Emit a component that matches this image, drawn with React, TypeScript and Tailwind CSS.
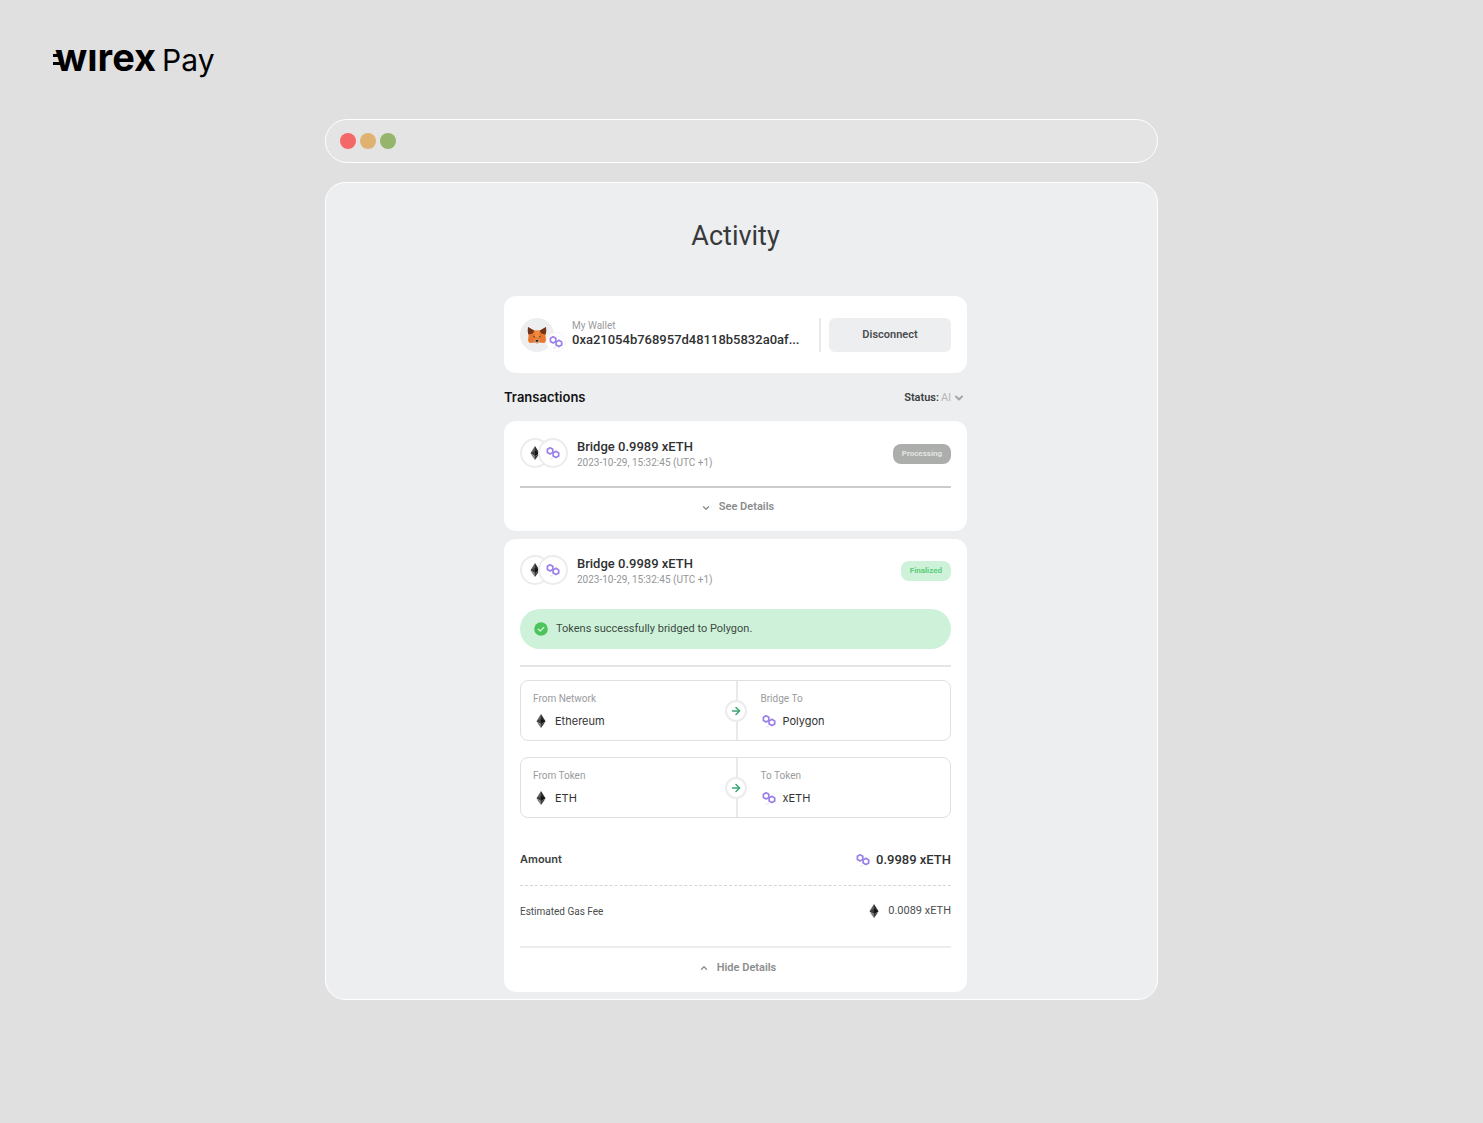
import React from 'react';
import { ArrowRight, ChevronDown, ChevronUp } from 'lucide-react';

const EthIcon = () => (
  <svg viewBox="0 0 12 16" className="w-3 h-4 shrink-0" aria-hidden="true">
    <path d="M6 1 1.5 8.2 6 11z" fill="#5c5c5c" />
    <path d="M6 1l4.5 7.2L6 11z" fill="#2d2d2d" />
    <path d="M6 6 1.5 8.2 6 11z" fill="#3c3c3b" />
    <path d="M6 6l4.5 2.2L6 11z" fill="#141414" />
    <path d="M1.7 9 6 15v-4z" fill="#7a7a7a" />
    <path d="M10.3 9 6 15v-4z" fill="#3c3c3b" />
  </svg>
);

const PolygonIcon = () => (
  <svg viewBox="0 0 14 14" className="w-3.5 h-3.5 shrink-0" fill="none" stroke="#9a80e8" aria-hidden="true">
    <path d="M4.1 1.8 6.8 3.3v3.2L4.1 8 1.4 6.5V3.3z" strokeWidth="1.7" strokeLinejoin="round" />
    <path d="M9.9 5.3l2.8 1.6v3.2l-2.8 1.5-2.8-1.5V6.9z" strokeWidth="1.7" strokeLinejoin="round" />
    <path d="M4 12.8h3" stroke="#ddd5f8" strokeWidth="0.8" />
  </svg>
);

const FoxIcon = () => (
  <svg viewBox="0 0 20 18" className="w-5 h-[18px]" aria-hidden="true">
    <path d="M1 1l6 3.6h6L19 1l-.6 8.5.6 5-1.6 2.5-5-.5-2.4 1-2.4-1-5 .5L1 14.5l.6-5z" fill="#e8762d" />
    <path d="M1 1l6.4 3.8L5.6 7.6 1.4 8.4.7 5z" fill="#6f341b" />
    <path d="M19 1l-6.4 3.8 1.8 2.8 4.2.8.7-3.4z" fill="#6f341b" />
    <path d="M7.4 4.8h5.2l-.9 6.7H8.3z" fill="#f28a3d" />
    <path d="M5.4 9.5l2.5 1-.3 1.2zM14.6 9.5l-2.5 1 .3 1.2z" fill="#374049" />
    <path d="M7.2 13.5h5.6l-.7 3.2-2.1.6-2.1-.6z" fill="#d0a488" />
    <path d="M8.5 14h3l-.5 1.8H9z" fill="#292929" />
  </svg>
);

const CheckIcon = () => (
  <svg viewBox="0 0 14 14" className="w-3.5 h-3.5 shrink-0" aria-hidden="true">
    <circle cx="7" cy="7" r="6.8" fill="#4cc45b" />
    <path d="M4.2 7.1l2 1.9 3.6-3.6" fill="none" stroke="#d8f7df" strokeWidth="1.3" strokeLinecap="round" strokeLinejoin="round" />
  </svg>
);

const Logo = () => (
  <div className="flex items-baseline h-10 font-[Inter,sans-serif] text-black" aria-label="Wirex Pay">
    <svg viewBox="0 0 10 18" className="w-2.5 h-[18px] -mr-2" aria-hidden="true">
      <path d="M0 1h7l1 3H0zM0 9h9l1 3H0z" fill="#000" />
    </svg>
    <span className="text-[38px] leading-10 font-bold">wırex</span>
    <span className="ml-1.5 text-[30px] leading-10">Pay</span>
  </div>
);

interface TransactionHeaderProps {
  title: string;
  date: string;
  status: 'Processing' | 'Finalized';
}

const TransactionHeader = ({ title, date, status }: TransactionHeaderProps) => (
  <div className="flex items-center h-[30px]">
    <div className="flex items-center">
      <span className="flex items-center justify-center w-[30px] h-[30px] rounded-full border-2 border-[#ececec] bg-white">
        <EthIcon />
      </span>
      <span className="flex items-center justify-center w-[30px] h-[30px] -ml-3 rounded-full border-2 border-[#ececec] bg-white">
        <PolygonIcon />
      </span>
    </div>
    <div className="ml-[9px] pt-1 flex-1">
      <h3 className="text-[13px] leading-4 font-medium text-[#2f3132]">{title}</h3>
      <p className="text-[10px] leading-4 text-[#949698]">{date}</p>
    </div>
    <span
      className={`mt-0.5 px-[9px] rounded-lg text-[8px] leading-5 font-semibold ${
        status === 'Processing' ? 'bg-[#acaeac] text-[#e6e7e6]' : 'bg-[#cdf2d9] text-[#55cb75]'
      }`}
    >
      {status}
    </span>
  </div>
);

interface TransferSideProps {
  label: string;
  value: string;
  icon: React.ReactNode;
}

const TransferSide = ({ label, value, icon }: TransferSideProps) => (
  <div>
    <p className="text-[10px] leading-4 text-[#9a9b9d]">{label}</p>
    <div className="flex items-center mt-1">
      <span className="flex justify-center w-4">{icon}</span>
      <span className="ml-1.5 font-[Inter,sans-serif] text-[11px] leading-5 text-[#303233]">{value}</span>
    </div>
  </div>
);

const TransferBox = ({ from, to }: { from: TransferSideProps; to: TransferSideProps }) => (
  <div className="relative grid grid-cols-2 h-[61px] border border-[#dfe0e1] rounded-lg">
    <div className="pl-3 pt-2.5">
      <TransferSide {...from} />
    </div>
    <div className="pl-[23px] pt-2.5 border-l-2 border-[#e8e9ea]">
      <TransferSide {...to} />
    </div>
    <span className="absolute left-1/2 top-1/2 -translate-x-1/2 -translate-y-1/2 flex items-center justify-center w-[22px] h-[22px] rounded-full border-2 border-[#ececed] bg-white">
      <ArrowRight className="w-3 h-3 text-[#3da673]" strokeWidth={3} />
    </span>
  </div>
);

const App = () => {
  return (
    <div className="min-h-screen bg-[#e0e0e0] font-[Roboto,sans-serif] pb-[123px]">
      <header className="pl-[53px] pt-[37px]">
        <Logo />
      </header>

      <main className="w-full max-w-[833px] mx-auto mt-[42px]">
        <div className="flex items-center gap-1 h-11 px-3.5 rounded-full border border-white bg-[#e4e4e4]">
          <span className="w-4 h-4 rounded-full bg-[#f56868]" />
          <span className="w-4 h-4 rounded-full bg-[#dfb272]" />
          <span className="w-4 h-4 rounded-full bg-[#94b56b]" />
        </div>

        <div className="mt-[19px] rounded-[20px] border border-white bg-[#edeef0] pt-[33px] pb-[7px] pr-3">
          <div className="w-full max-w-[463px] mx-auto">
            <h1 className="text-center text-[27px] leading-10 text-[#37393b]">Activity</h1>

            <section className="flex items-center mt-10 h-[77px] px-4 rounded-xl bg-white">
              <div className="flex items-end">
                <span className="flex items-center justify-center w-[34px] h-[34px] rounded-full bg-[#edeef0]">
                  <FoxIcon />
                </span>
                <span className="flex items-center justify-center w-5 h-5 -ml-2 rounded-full bg-white border border-[#f5f5f7]">
                  <PolygonIcon />
                </span>
              </div>
              <div className="ml-1.5 pb-0.5 flex-1 min-w-0">
                <p className="text-[10px] leading-3 text-[#9a9b9d]">My Wallet</p>
                <p className="text-[13px] leading-4 font-medium text-[#2f3132]">0xa21054b768957d48118b5832a0af...</p>
              </div>
              <span className="w-0.5 h-[34px] mr-2 bg-[#e8e9ea]" />
              <button type="button" className="w-[122px] h-[34px] pt-0.5 rounded-md bg-[#edeef0] text-[11px] font-semibold text-[#4b4d4e]">
                Disconnect
              </button>
            </section>

            <div className="flex items-center justify-between h-12">
              <h2 className="font-[Inter,sans-serif] text-[13px] leading-5 font-semibold text-[#121415]">Transactions</h2>
              <div className="relative flex items-center pt-0.5 pr-0.5 text-[11px] leading-4">
                <label htmlFor="status" className="font-semibold text-[#3d3f40]">Status:</label>
                <select id="status" className="appearance-none w-6 ml-0.5 bg-transparent text-[#b5b6b8]">
                  <option>Al</option>
                </select>
                <ChevronDown className="absolute right-0.5 w-3 h-3 text-[#a5a6a8] pointer-events-none" strokeWidth={4} />
              </div>
            </div>

            <section className="px-4 pt-[17px] rounded-xl bg-white">
              <TransactionHeader title="Bridge 0.9989 xETH" date="2023-10-29, 15:32:45 (UTC +1)" status="Processing" />
              <button
                type="button"
                className="flex items-center justify-center w-full h-[45px] mt-[18px] pb-1 pl-1 gap-2 border-t-2 border-[#cbcccd] text-[11px] font-semibold text-[#8b8d8e]"
              >
                <ChevronDown className="w-2.5 h-2.5" strokeWidth={3} />
                See Details
              </button>
            </section>

            <section className="mt-2 px-4 pt-4 rounded-xl bg-white">
              <TransactionHeader title="Bridge 0.9989 xETH" date="2023-10-29, 15:32:45 (UTC +1)" status="Finalized" />
              <div className="flex items-center gap-2 h-10 mt-6 px-3.5 rounded-full bg-[#cdf2d9] text-[11px] text-[#3d4a42]">
                <CheckIcon />
                Tokens successfully bridged to Polygon.
              </div>

              <div className="flex flex-col gap-4 mt-4 pt-[13px] border-t-2 border-[#e4e5e6]">
                <TransferBox
                  from={{ label: 'From Network', value: 'Ethereum', icon: <EthIcon /> }}
                  to={{ label: 'Bridge To', value: 'Polygon', icon: <PolygonIcon /> }}
                />
                <TransferBox
                  from={{ label: 'From Token', value: 'ETH', icon: <EthIcon /> }}
                  to={{ label: 'To Token', value: 'xETH', icon: <PolygonIcon /> }}
                />
              </div>

              <dl>
                <div className="flex items-center justify-between h-[51px] mt-4">
                  <dt className="font-[Inter,sans-serif] text-[11px] font-semibold text-[#3d3f40]">Amount</dt>
                  <dd className="flex items-center gap-1.5 text-[13px] font-medium text-[#2f3132]">
                    <PolygonIcon />
                    0.9989 xETH
                  </dd>
                </div>
                <div className="flex items-center justify-between h-[51px] border-t border-dashed border-[#d4d5d6]">
                  <dt className="text-[10px] text-[#4b4d4e]">Estimated Gas Fee</dt>
                  <dd className="flex items-center gap-2 text-[11px] text-[#4b4d4e]">
                    <EthIcon />
                    0.0089 xETH
                  </dd>
                </div>
              </dl>

              <button
                type="button"
                className="flex items-center justify-center w-full h-[46px] mt-2.5 pb-1 pl-1 gap-2 border-t-2 border-[#eceded] text-[11px] font-semibold text-[#8b8d8e]"
              >
                <ChevronUp className="w-2.5 h-2.5" strokeWidth={3} />
                Hide Details
              </button>
            </section>
          </div>
        </div>
      </main>
    </div>
  );
};

export default App;
